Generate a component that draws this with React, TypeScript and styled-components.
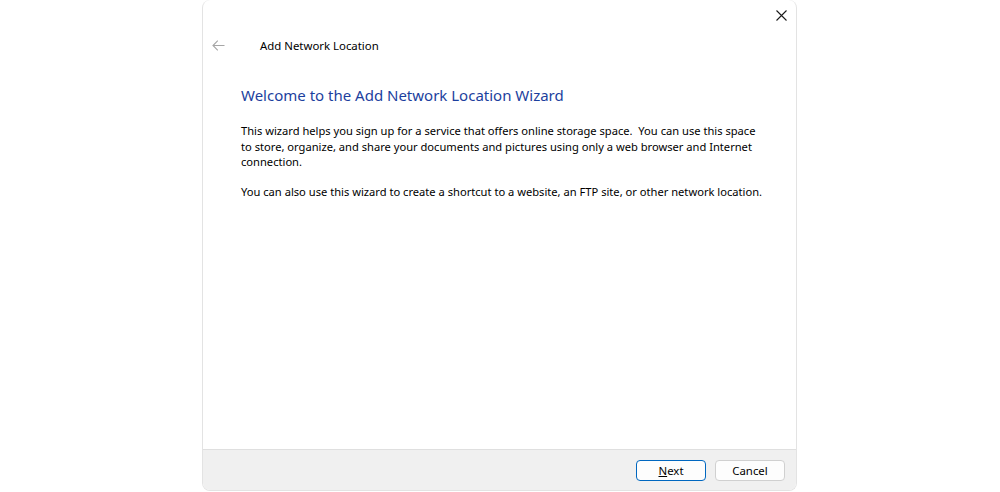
import React from 'react';
import styled, { createGlobalStyle } from 'styled-components';

const GlobalStyle = createGlobalStyle`
  html, body {
    margin: 0;
    padding: 0;
    background: #ffffff;
  }
  body {
    font-family: "Noto Sans", "Open Sans", sans-serif;
    font-size: 11.4px;
    color: #000000;
  }
`;

const Page = styled.div`
  display: flex;
  height: 492px;
  padding-left: 202px;
`;

const Window = styled.div`
  width: 593px;
  height: 490px;
  display: flex;
  flex-direction: column;
  border: 1px solid #e3e3e3;
  border-top: none;
  border-radius: 8px;
  overflow: hidden;
  background: #ffffff;
`;

const TitleBar = styled.div`
  height: 30px;
  display: flex;
  justify-content: flex-end;
  align-items: center;
`;

const CloseButton = styled.button`
  width: 30px;
  height: 30px;
  border: none;
  background: transparent;
  display: flex;
  align-items: center;
  justify-content: center;
  padding: 0;
  color: #1a1a1a;
`;

const Header = styled.div`
  display: flex;
  align-items: center;
  height: 30px;
  padding-left: 7px;
`;

const BackButton = styled.span`
  width: 16px;
  display: flex;
  align-items: center;
  justify-content: center;
  color: #a0a0a0;
  margin-right: 34px;
`;

const HeaderTitle = styled.span`
  font-size: 11.4px;
  color: #000000;
`;

const Content = styled.div`
  flex: 1;
  padding: 24px 20px 0 38px;
`;

const WizardTitle = styled.h1`
  margin: 0 0 17px 0;
  font-size: 15px;
  font-weight: normal;
  color: #1c3f9e;
  line-height: 22px;
`;

const Paragraph = styled.p`
  margin: 0 0 14px 0;
  font-size: 11.15px;
  line-height: 15.5px;
`;

const Footer = styled.div`
  height: 40px;
  background: #f0f0f0;
  border-top: 1px solid #dfdfdf;
  display: flex;
  justify-content: flex-end;
  align-items: center;
  gap: 9px;
  padding-right: 11px;
`;

const Button = styled.button<{ $primary?: boolean }>`
  width: 70px;
  height: 21px;
  font-family: inherit;
  font-size: 11.4px;
  color: #000000;
  background: #fdfdfd;
  border: 1px solid ${p => (p.$primary ? '#0067c0' : '#d0d0d0')};
  border-radius: 4px;
  padding: 0;
  display: flex;
  align-items: center;
  justify-content: center;
`;

const Mnemonic = styled.span`
  text-decoration: underline;
`;

export default function App() {
  return (
    <>
      <GlobalStyle />
      <Page>
        <Window>
          <TitleBar>
            <CloseButton aria-label="Close">
              <svg width="11" height="11" viewBox="0 0 11 11">
                <path d="M0.5 0.5 L10.5 10.5 M10.5 0.5 L0.5 10.5" stroke="#1a1a1a" strokeWidth="1.1" fill="none" />
              </svg>
            </CloseButton>
          </TitleBar>
          <Header>
            <BackButton>
              <svg width="13" height="11" viewBox="0 0 13 11">
                <path d="M12.5 5.5 H1 M5.8 0.7 L1 5.5 L5.8 10.3" stroke="#a6a6a6" strokeWidth="1.1" fill="none" />
              </svg>
            </BackButton>
            <HeaderTitle>Add Network Location</HeaderTitle>
          </Header>
          <Content>
            <WizardTitle>Welcome to the Add Network Location Wizard</WizardTitle>
            <Paragraph>
              This wizard helps you sign up for a service that offers online storage space.&nbsp; You can use this space
              <br />
              to store, organize, and share your documents and pictures using only a web browser and Internet
              <br />
              connection.
            </Paragraph>
            <Paragraph>
              You can also use this wizard to create a shortcut to a website, an FTP site, or other network location.
            </Paragraph>
          </Content>
          <Footer>
            <Button $primary>
              <Mnemonic>N</Mnemonic>ext
            </Button>
            <Button>Cancel</Button>
          </Footer>
        </Window>
      </Page>
    </>
  );
}
